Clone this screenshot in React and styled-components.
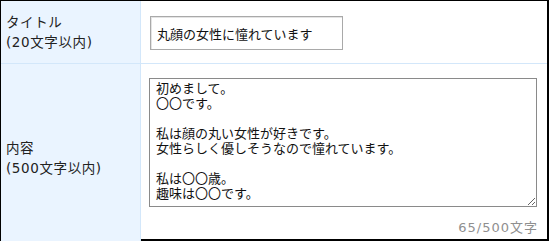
import { useState } from "react"
import styled, { createGlobalStyle } from "styled-components"

const GlobalStyle = createGlobalStyle`
    body {
        margin: 0;
        background: #fff;
        font-family: "DejaVu Sans", "Noto Sans CJK JP", sans-serif;
        color: #222;
    }
`

const initialBody = `初めまして。
〇〇です。

私は顔の丸い女性が好きです。
女性らしく優しそうなので憧れています。

私は〇〇歳。
趣味は〇〇です。`

const App = () => {
    const [title, setTitle] = useState("丸顔の女性に憧れています")
    const [body, setBody] = useState(initialBody)

    return (
        <>
            <GlobalStyle />
            <Frame>
                <Row>
                    <Label>
                        <span>タイトル</span>
                        <span>(20文字以内)</span>
                    </Label>
                    <Field $pad="15px 8px 13px">
                        <TitleInput value={title} onChange={e => setTitle(e.target.value)} />
                    </Field>
                </Row>
                <Row $last>
                    <Label $shift="10px">
                        <span>内容</span>
                        <span>(500文字以内)</span>
                    </Label>
                    <Field $pad="14px 8px 6px">
                        <BodyArea value={body} onChange={e => setBody(e.target.value)} />
                        <Counter>65/500文字</Counter>
                    </Field>
                </Row>
            </Frame>
        </>
    )
}

const Frame = styled.div`
    width: 546px;
    height: 238px;
    border: 1px solid #000;
    border-right-width: 2px;
    border-bottom-width: 2px;
    display: flex;
    flex-direction: column;
`

const Row = styled.div`
    display: grid;
    grid-template-columns: 140px 1fr;
    flex: ${props => props.$last ? 1 : "none"};
    border-bottom: ${props => props.$last ? "none" : "1px solid #d3e7fa"};
`

const Label = styled.div`
    background: #eaf4ff;
    border-right: 1px solid #d3e7fa;
    display: flex;
    flex-direction: column;
    justify-content: center;
    padding: ${props => props.$shift || "0"} 0 0 5px;
    font-size: 13.5px;
    letter-spacing: 0.6px;
    line-height: 20px;
`

const Field = styled.div`
    padding: ${props => props.$pad};
    display: flex;
    flex-direction: column;
`

const TitleInput = styled.input`
    box-sizing: border-box;
    width: 193px;
    height: 34px;
    margin-left: 1px;
    padding: 0 6px;
    border: 1px solid #a9a9a9;
    box-shadow: inset 1px 1px 0 #e4e4e4;
    font-family: inherit;
    font-size: 13px;
    color: #111;
    outline: none;
`

const BodyArea = styled.textarea`
    box-sizing: border-box;
    width: 388px;
    height: 129px;
    padding: 2px 6px 0;
    border: 1px solid #8a8a8a;
    font-family: inherit;
    font-size: 13px;
    line-height: 15px;
    color: #111;
    outline: none;
    overflow: hidden;
`

const Counter = styled.div`
    align-self: flex-end;
    margin-top: 10px;
    margin-right: 1px;
    font-size: 13px;
    letter-spacing: 1px;
    color: #8f8f8f;
`

export default App
